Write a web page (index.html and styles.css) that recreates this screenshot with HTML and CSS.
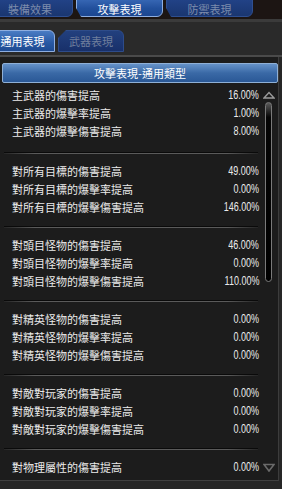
FILE: index.html
```html
<!DOCTYPE html>
<html lang="zh-Hant">
<head>
  <meta charset="UTF-8">
  <meta name="viewport" content="width=device-width">
  <title>攻擊表現</title>
  <link rel="stylesheet" href="styles.css">
</head>
<body>
  <div class="topbar">
    <div class="tab tab-first">裝備效果</div>
    <div class="tab tab-on">攻擊表現</div>
    <div class="tab">防禦表現</div>
  </div>

  <div class="subbar">
    <div class="subtab subtab-first subtab-on">通用表現</div>
    <div class="subtab">武器表現</div>
  </div>

  <div class="panel">
    <div class="panel-title">攻擊表現-通用類型</div>
    <div class="panel-body">
      <div class="list">
        <div class="group">
          <div class="row"><span>主武器的傷害提高</span><span class="val">16.00%</span></div>
          <div class="row"><span>主武器的爆擊率提高</span><span class="val">1.00%</span></div>
          <div class="row"><span>主武器的爆擊傷害提高</span><span class="val">8.00%</span></div>
        </div>
        <div class="sep sep-first"></div>
        <div class="group">
          <div class="row"><span>對所有目標的傷害提高</span><span class="val">49.00%</span></div>
          <div class="row"><span>對所有目標的爆擊率提高</span><span class="val">0.00%</span></div>
          <div class="row"><span>對所有目標的爆擊傷害提高</span><span class="val">146.00%</span></div>
        </div>
        <div class="sep"></div>
        <div class="group">
          <div class="row"><span>對頭目怪物的傷害提高</span><span class="val">46.00%</span></div>
          <div class="row"><span>對頭目怪物的爆擊率提高</span><span class="val">0.00%</span></div>
          <div class="row"><span>對頭目怪物的爆擊傷害提高</span><span class="val">110.00%</span></div>
        </div>
        <div class="sep"></div>
        <div class="group">
          <div class="row"><span>對精英怪物的傷害提高</span><span class="val">0.00%</span></div>
          <div class="row"><span>對精英怪物的爆擊率提高</span><span class="val">0.00%</span></div>
          <div class="row"><span>對精英怪物的爆擊傷害提高</span><span class="val">0.00%</span></div>
        </div>
        <div class="sep"></div>
        <div class="group">
          <div class="row"><span>對敵對玩家的傷害提高</span><span class="val">0.00%</span></div>
          <div class="row"><span>對敵對玩家的爆擊率提高</span><span class="val">0.00%</span></div>
          <div class="row"><span>對敵對玩家的爆擊傷害提高</span><span class="val">0.00%</span></div>
        </div>
        <div class="sep"></div>
        <div class="group">
          <div class="row"><span>對物理屬性的傷害提高</span><span class="val">0.00%</span></div>
        </div>
      </div>

      <div class="scroll">
        <svg class="arrow-up" width="12" height="8" viewBox="0 0 12 8">
          <path d="M1 7 L6 1.5 L11 7 Z" fill="none" stroke="#9a9a9a" stroke-width="1.4"/>
        </svg>
        <div class="thumb"></div>
        <svg class="arrow-down" width="12" height="9" viewBox="0 0 12 9">
          <path d="M1 1.5 L11 1.5 L6 8 Z" fill="none" stroke="#6a6a6a" stroke-width="1.6"/>
        </svg>
      </div>
    </div>
  </div>
</body>
</html>
```

FILE: styles.css
```css
body {
  margin: 0;
  width: 282px;
  height: 489px;
  overflow: hidden;
  background: #262626;
  font-family: "Noto Sans CJK TC", "Noto Sans", sans-serif;
  font-size: 11px;
}

/* top tabs */
.topbar {
  height: 19px;
  display: flex;
  gap: 3px;
  overflow: hidden;
  background: #1c1513;
  border-bottom: 3px solid #3b3b3b;
}

.tab {
  flex: none;
  width: 87px;
  height: 21px;
  margin-top: -4px;
  padding-top: 4px;
  box-sizing: border-box;
  line-height: 17px;
  text-align: center;
  color: #7d8cac;
  background: linear-gradient(#23448a, #1a3670);
  border: 1px solid #2f4f90;
  border-radius: 0 0 6px 6px;
  clip-path: polygon(0 0, 100% 0, 100% 100%, 5px 100%, 0 calc(100% - 9px));
}

.tab-first {
  width: 86px;
  margin-left: -13px;
  clip-path: none;
}

.tab-on {
  color: #fff;
  background: linear-gradient(#3d6dbb, #22509c 60%, #1b4690);
  border-color: #8eaee0;
}

/* sub tabs */
.subbar {
  height: 30px;
  padding-bottom: 3px;
  display: flex;
  align-items: flex-end;
  gap: 3px;
  overflow: hidden;
  background: #2a2a2a;
  border-bottom: 2px solid #4a4a4a;
}

.subtab {
  flex: none;
  width: 66px;
  height: 22px;
  box-sizing: border-box;
  line-height: 20px;
  text-align: center;
  color: #6f7e9c;
  background: linear-gradient(#22407e, #18306a);
  border: 1px solid #2e4c8a;
  border-radius: 6px 6px 0 0;
  clip-path: polygon(8px 0, 100% 0, 100% 100%, 0 100%, 0 8px);
}

.subtab-first {
  width: 65px;
  margin-left: -10px;
  clip-path: none;
}

.subtab-on {
  color: #fff;
  background: linear-gradient(#4a7cc4, #2858a2 60%, #1e4b92);
  border-color: #8eaee0;
}

/* panel */
.panel {
  width: 278px;
  padding-top: 6px;
  background: #1c1c1c;
  border-right: 1px solid #3c3c3c;
  border-bottom: 1px solid #404040;
}

.panel-title {
  height: 20px;
  margin-left: 2px;
  box-sizing: border-box;
  line-height: 18px;
  text-align: center;
  color: #fff;
  background: linear-gradient(#6592c8, #3a69a6 50%, #2a5896);
  border: 1px solid #8fb0d6;
  border-radius: 2px;
}

.panel-body {
  height: 397px;
  display: flex;
  overflow: hidden;
}

.list {
  width: 255px;
  padding: 3px 0 0 4px;
}

.row {
  height: 18px;
  line-height: 18px;
  padding-left: 8px;
  display: flex;
  justify-content: space-between;
  color: #ebebeb;
}

.val {
  display: inline-block;
  font-family: "Liberation Sans", sans-serif;
  font-size: 12px;
  transform: scaleX(0.75);
  transform-origin: right center;
}

.sep {
  height: 1px;
  margin: 10px 1px 8px 0;
  border-top: 1px solid #0a0a0a;
  background: linear-gradient(90deg, #262626, #5a5a5a 12%, #5a5a5a 88%, #262626);
}

.sep-first {
  margin-top: 12px;
}

/* scrollbar */
.scroll {
  width: 19px;
  display: flex;
  flex-direction: column;
  align-items: center;
}

.arrow-up {
  margin-top: 8px;
}

.thumb {
  width: 7px;
  height: 180px;
  margin-top: 3px;
  box-sizing: border-box;
  border: 1px solid #7a7a7a;
  border-radius: 4px;
  background: linear-gradient(#5a5a5a, #050505 8%, #000);
}

.arrow-down {
  margin-top: 181px;
}
```
